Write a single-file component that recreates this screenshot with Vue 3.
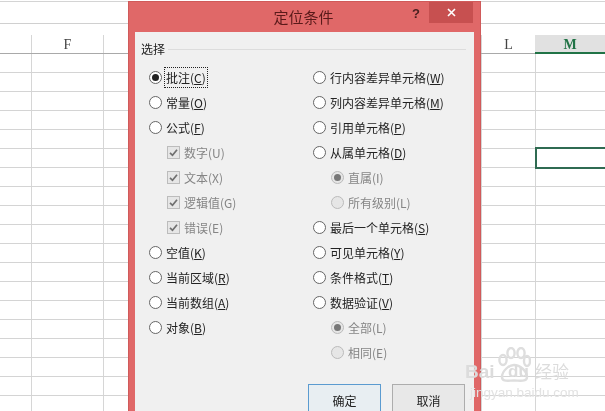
<script setup>
const rows = Array.from({ length: 20 })
const leftOptions = [
  { label: '批注', key: 'C', checked: true, focus: true },
  { label: '常量', key: 'O' },
  { label: '公式', key: 'F' },
  { label: '数字', key: 'U', box: true },
  { label: '文本', key: 'X', box: true },
  { label: '逻辑值', key: 'G', box: true },
  { label: '错误', key: 'E', box: true },
  { label: '空值', key: 'K' },
  { label: '当前区域', key: 'R' },
  { label: '当前数组', key: 'A' },
  { label: '对象', key: 'B' }
]
const rightOptions = [
  { label: '行内容差异单元格', key: 'W' },
  { label: '列内容差异单元格', key: 'M' },
  { label: '引用单元格', key: 'P' },
  { label: '从属单元格', key: 'D' },
  { label: '直属', key: 'I', sub: true, checked: true },
  { label: '所有级别', key: 'L', sub: true },
  { label: '最后一个单元格', key: 'S' },
  { label: '可见单元格', key: 'Y' },
  { label: '条件格式', key: 'T' },
  { label: '数据验证', key: 'V' },
  { label: '全部', key: 'L', sub: true, checked: true },
  { label: '相同', key: 'E', sub: true }
]
</script>

<template>
  <div class="page">
    <div class="sheet">
      <div class="top-strip"></div>
      <div class="header">
        <div class="corner"></div>
        <div class="col-head wide">F</div>
        <div class="col-head hidden-col"></div>
        <div class="col-head l-col">L</div>
        <div class="col-head m-col">M</div>
      </div>
      <div v-for="(r, i) in rows" :key="i" class="row">
        <div class="cell corner"></div>
        <div class="cell wide"></div>
        <div class="cell hidden-col"></div>
        <div class="cell l-col"></div>
        <div class="cell m-col" :class="{ selected: i === 5 }"></div>
      </div>
    </div>

    <section class="dialog">
      <header class="titlebar">
        <span class="title">定位条件</span>
        <span class="help">?</span>
        <span class="close">
          <svg width="11" height="9" viewBox="0 0 11 9">
            <path d="M2 1 L9 8 M9 1 L2 8" stroke="#fff" stroke-width="1.6" fill="none" />
          </svg>
        </span>
      </header>
      <div class="body">
        <div class="legend">
          <span>选择</span>
          <i class="legend-line"></i>
        </div>
        <div class="columns">
          <div class="column left">
            <div v-for="o in leftOptions" :key="o.key" class="option" :class="{ isbox: o.box }">
              <span v-if="o.box" class="box">
                <svg width="11" height="11" viewBox="0 0 11 11">
                  <path d="M2 5.8 L4.5 8.3 L9 2.8" stroke="#6f6f6f" stroke-width="1.7" fill="none" />
                </svg>
              </span>
              <span v-else class="radio" :class="{ on: o.checked }"></span>
              <span class="text" :class="{ focus: o.focus, dim: o.box }">{{ o.label }}(<u v-if="!o.box">{{ o.key }}</u><template v-else>{{ o.key }}</template>)</span>
            </div>
          </div>
          <div class="column right">
            <div v-for="o in rightOptions" :key="o.label" class="option" :class="{ sub: o.sub }">
              <span class="radio" :class="{ on: o.checked, off: o.sub }"></span>
              <span class="text" :class="{ dim: o.sub }">{{ o.label }}(<u v-if="!o.sub">{{ o.key }}</u><template v-else>{{ o.key }}</template>)</span>
            </div>
          </div>
        </div>
        <div class="actions">
          <button class="btn primary">确定</button>
          <button class="btn">取消</button>
        </div>
      </div>
    </section>

    <div class="watermark">
      <div class="wm-top">
        <span class="wm-bai">Bai</span>
        <div class="wm-paw">
          <svg width="34" height="36" viewBox="0 0 34 36">
            <g fill="none" stroke="#dedede" stroke-width="2.4">
              <ellipse cx="6" cy="13" rx="3.6" ry="5" />
              <ellipse cx="14" cy="6" rx="3.6" ry="5" />
              <ellipse cx="24" cy="6" rx="3.6" ry="5" />
              <ellipse cx="30" cy="14" rx="3" ry="5" />
              <path d="M5 30 C5 24 12 18 17 18 C23 18 30 24 30 30 C30 35 23 33.5 17 33.5 C11 33.5 5 35 5 30 Z" />
            </g>
          </svg>
          <span class="wm-du">du</span>
        </div>
        <span class="wm-cn">经验</span>
      </div>
      <div class="wm-url">jingyan.baidu.com</div>
    </div>
  </div>
</template>

<style scoped>
.page {
  position: relative;
  width: 605px;
  height: 411px;
  overflow: hidden;
  background: #fff;
  font-family: "Noto Sans CJK SC", "Liberation Sans", sans-serif;
  filter: blur(0.3px);
}
.sheet {
  display: flex;
  flex-direction: column;
}
.top-strip {
  height: 21px;
  margin-top: 1px;
  border-top: 1px solid #d4d4d4;
  border-bottom: 1px solid #d0d0d0;
  box-sizing: content-box;
}
.header {
  display: flex;
  height: 18px;
  margin-top: 11px;
  border-bottom: 1px solid #a9a9a9;
  box-sizing: content-box;
}
.corner { width: 31px; flex: none; }
.wide { width: 72px; flex: none; }
.hidden-col { width: 378px; flex: none; }
.l-col { width: 54px; flex: none; }
.m-col { flex: 1; }
.col-head {
  box-sizing: border-box;
  border-left: 1px solid #d6d6d6;
  text-align: center;
  font: 14px/19px "Liberation Serif", serif;
  color: #444;
}
.col-head.m-col {
  background: #e1e1e1;
  color: #217346;
  font-weight: bold;
  border-left: 0;
  margin-bottom: -1px;
  border-bottom: 2px solid #217346;
}
.row {
  display: flex;
  height: 19px;
  box-sizing: border-box;
  border-bottom: 1px solid #d4d4d4;
}
.cell {
  box-sizing: border-box;
  border-left: 1px solid #d6d6d6;
}
.cell.corner { border-left: 0; }
.cell.selected {
  height: 22px;
  margin-top: -2px;
  position: relative;
  border: 2px solid #2f6b52;
  border-right: 0;
}

.dialog {
  position: absolute;
  left: 128px;
  top: 1px;
  width: 353px;
  height: 430px;
  box-sizing: border-box;
  background: #e06868;
  border: 1px solid #d05a5a;
  border-bottom: 0;
  padding: 0 6px;
  display: flex;
  flex-direction: column;
}
.titlebar {
  position: relative;
  height: 30px;
  flex: none;
  display: flex;
  justify-content: center;
  align-items: center;
}
.title {
  font-size: 15px;
  color: #5a1a1a;
  margin-top: -2px;
  margin-left: -2px;
}
.help {
  position: absolute;
  left: 277px;
  top: 3px;
  font: bold 13px/18px "Liberation Sans", sans-serif;
  color: #4a2020;
}
.close {
  position: absolute;
  left: 294px;
  top: 0;
  width: 44px;
  height: 21px;
  background: #c75050;
  display: flex;
  align-items: center;
  justify-content: center;
}
.body {
  flex: 1;
  background: #f0f0f0;
  padding: 9px 8px 0 6px;
  display: flex;
  flex-direction: column;
  font-size: 12px;
  color: #222;
}
.legend {
  display: flex;
  align-items: center;
  gap: 3px;
  height: 16px;
  line-height: 16px;
}
.legend-line {
  flex: 1;
  height: 1px;
  background: #dcdcdc;
}
.columns {
  display: flex;
  margin-top: 8px;
}
.column { display: flex; flex-direction: column; }
.column.left { width: 163px; padding-left: 8px; }
.column.right { padding-left: 1px; }
.option {
  height: 25px;
  display: flex;
  align-items: center;
  gap: 4px;
}
.option.isbox { padding-left: 18px; gap: 4px; }
.option.sub { padding-left: 18px; }
.radio {
  width: 13px;
  height: 13px;
  flex: none;
  box-sizing: border-box;
  border-radius: 50%;
  border: 1px solid #666;
  background: #fff;
  display: flex;
  align-items: center;
  justify-content: center;
}
.radio.on::after {
  content: "";
  width: 7px;
  height: 7px;
  border-radius: 50%;
  background: #222;
}
.radio.off {
  background: #e6e6e6;
  border-color: #bbb;
}
.radio.off.on::after { background: #777; }
.box {
  width: 13px;
  height: 13px;
  flex: none;
  box-sizing: border-box;
  border: 1px solid #bcbcbc;
  background: #e6e6e6;
  display: flex;
  align-items: center;
  justify-content: center;
}
.text { line-height: 17px; white-space: nowrap; }
.text.dim { color: #858585; }
.text.focus { outline: 1px dotted #222; outline-offset: 1px; }
.actions {
  display: flex;
  gap: 11px;
  margin-top: 19px;
  padding-left: 167px;
}
.btn {
  width: 73px;
  height: 32px;
  box-sizing: border-box;
  background: #e8e8e8;
  border: 1px solid #adadad;
  font: 12px "Noto Sans CJK SC", sans-serif;
  color: #222;
  padding: 0;
}
.btn.primary {
  border-color: #5b9bd0;
  background: #e8eef2;
}

.watermark {
  position: absolute;
  left: 465px;
  top: 347px;
  pointer-events: none;
  color: #dcdcdc;
}
.wm-top {
  display: flex;
  align-items: flex-start;
  height: 39px;
}
.wm-bai {
  font: bold 19px/20px "Liberation Sans", sans-serif;
  margin-top: 15px;
  width: 32px;
}
.wm-paw {
  position: relative;
  width: 38px;
}
.wm-du {
  position: absolute;
  left: 11px;
  top: 15px;
  font: bold 17px/20px "Liberation Sans", sans-serif;
}
.wm-cn {
  font-size: 17px;
  line-height: 20px;
  margin-top: 14px;
}
.wm-url {
  font: 13.5px/14px "Liberation Sans", sans-serif;
  color: #e2e2e2;
  margin-left: 5px;
}
</style>
